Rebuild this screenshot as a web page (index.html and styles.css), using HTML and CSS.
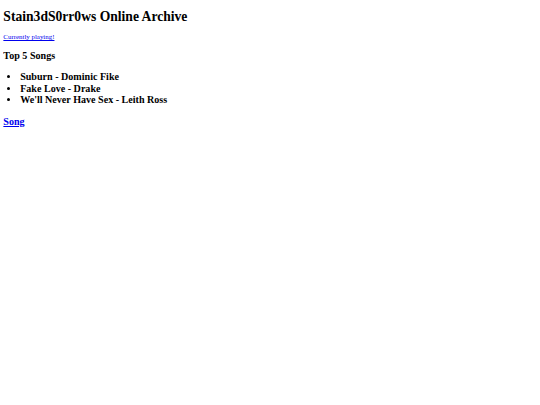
FILE: index.html
```html
<!DOCTYPE html>
<html>
<head>
<meta charset="utf-8">
<title>Stain3dS0rr0ws Online Archive</title>
<link rel="stylesheet" href="styles.css">
</head>
<body class="page">
<h1 class="title">Stain3dS0rr0ws Online Archive</h1>
<a class="playing" href="#">Currently playing!</a>
<h2 class="section">Top 5 Songs</h2>
<ul class="songs">
<li class="song-item"><h2 class="song">Suburn - Dominic Fike</h2></li>
<li class="song-item"><h2 class="song">Fake Love - Drake</h2></li>
<li class="song-item"><h2 class="song">We'll Never Have Sex - Leith Ross</h2></li>
</ul>
<h2 class="section section-last"><a class="song-link" href="#">Song</a></h2>
</body>
</html>
```
FILE: styles.css
```css
html { background: #fff; }
.page {
  margin: 3.36px;
  font-family: "Liberation Serif", "Times New Roman", serif;
  font-size: 6.72px;
  color: #000;
}
.title { font-size: 13.6px; margin: 6px 0 8px; font-weight: bold; }
.playing { color: #0000ee; font-size: 6.9px; }
.section { font-size: 10.08px; margin: 9.4px 0 10.4px; font-weight: bold; }
.section-last { margin-top: 10.6px; }
.section a { color: #0000ee; }
.songs { margin: 6.72px 0; padding-left: 16.8px; }
.song-item { font-size: 10.08px; line-height: 11.5px; }
.song { font-size: 10.08px; line-height: 11.5px; margin: 0; font-weight: bold; }
```
